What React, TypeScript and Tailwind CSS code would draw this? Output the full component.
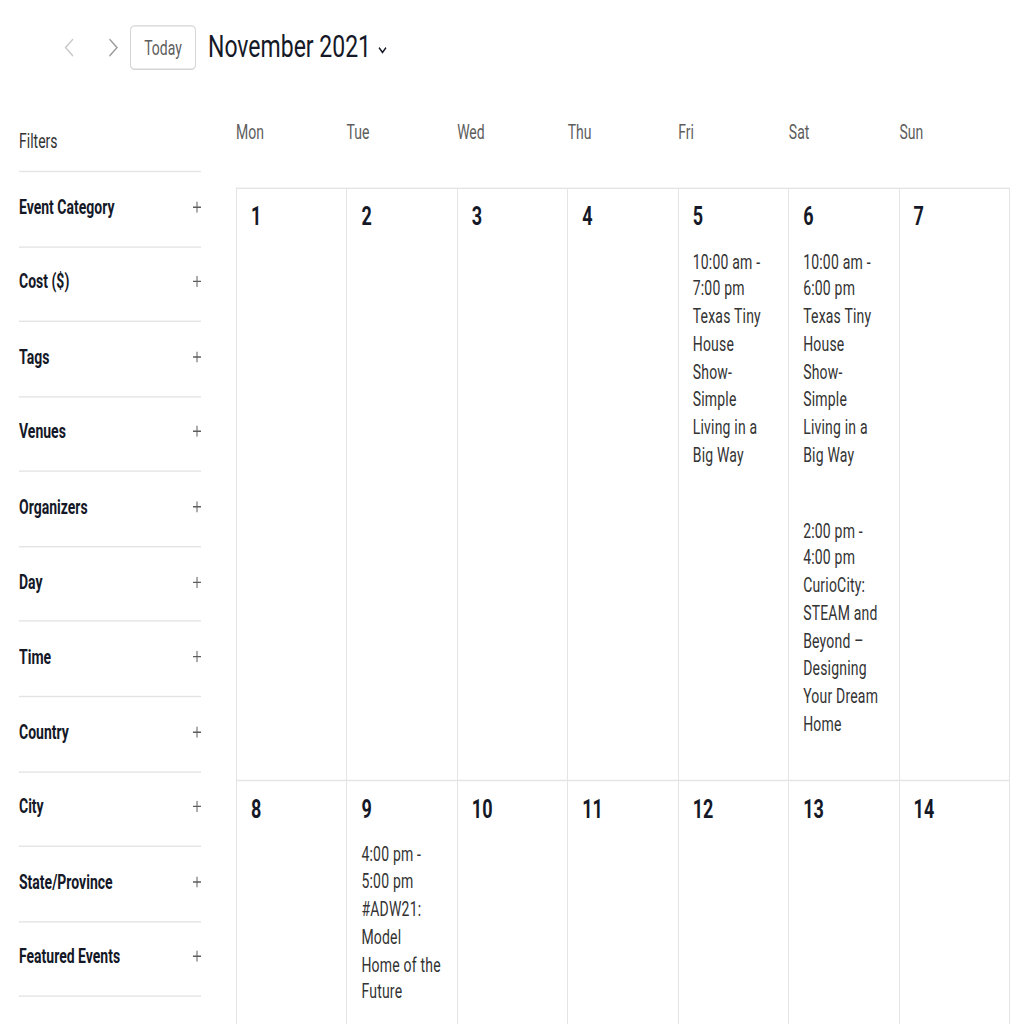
import React from "react";

type CalEvent = { time: string[]; title: string[] };
type Day = { n: number; events?: CalEvent[] };

const filters = [
  "Event Category",
  "Cost ($)",
  "Tags",
  "Venues",
  "Organizers",
  "Day",
  "Time",
  "Country",
  "City",
  "State/Province",
  "Featured Events",
];

const weekdays = ["Mon", "Tue", "Wed", "Thu", "Fri", "Sat", "Sun"];

const tinyHouse = ["Texas Tiny", "House", "Show-", "Simple", "Living in a", "Big Way"];

const weeks: Day[][] = [
  [
    { n: 1 },
    { n: 2 },
    { n: 3 },
    { n: 4 },
    { n: 5, events: [{ time: ["10:00 am -", "7:00 pm"], title: tinyHouse }] },
    {
      n: 6,
      events: [
        { time: ["10:00 am -", "6:00 pm"], title: tinyHouse },
        {
          time: ["2:00 pm -", "4:00 pm"],
          title: ["CurioCity:", "STEAM and", "Beyond \u2013", "Designing", "Your Dream", "Home"],
        },
      ],
    },
    { n: 7 },
  ],
  [
    { n: 8 },
    {
      n: 9,
      events: [
        { time: ["4:00 pm -", "5:00 pm"], title: ["#ADW21:", "Model", "Home of the", "Future"] },
      ],
    },
    { n: 10 },
    { n: 11 },
    { n: 12 },
    { n: 13 },
    { n: 14 },
  ],
];

function Plus() {
  return (
    <svg width="8" height="8" viewBox="0 0 8 8" fill="none" stroke="#5d5d5d" strokeWidth="1">
      <path d="M4 0v8M0 4h8" />
    </svg>
  );
}

function Chevron({ dir, color }: { dir: "left" | "right"; color: string }) {
  return (
    <svg width="10" height="14" viewBox="0 0 10 14" fill="none" stroke={color} strokeWidth="1.2">
      {dir === "left" ? <path d="M9 1 1.5 7 9 13" /> : <path d="M1.5 1 9 7l-7.5 6" />}
    </svg>
  );
}

function DayCell({ day, tall }: { day: Day; tall: boolean }) {
  return (
    <div
      className={`border-r border-b border-[#e4e4e4] px-[14px] pt-[8px] ${
        tall ? "h-[423px]" : "h-[300px]"
      }`}
    >
      <div className="text-[18px] leading-[24px] font-bold text-[#141827]">{day.n}</div>
      {day.events && (
        <div className="mt-[10.5px] flex flex-col gap-[34px]">
          {day.events.map((ev, i) => (
            <div key={i} className="text-[14px] leading-[19.75px] tracking-[0.2px] text-[#333]">
              {[...ev.time, ...ev.title].map((line, j) => (
                <div key={j} className="whitespace-nowrap">
                  {line}
                </div>
              ))}
            </div>
          ))}
        </div>
      )}
    </div>
  );
}

export default function App() {
  return (
    <div className="h-screen w-[1024px] overflow-hidden bg-white font-[Roboto,sans-serif]">
      {/* the whole calendar is drawn at a 1.4 vertical stretch */}
      <div className="w-[1024px] origin-top-left scale-y-[1.4]">
        <header className="flex h-[68px] items-center pl-[64px]">
          <div className="flex items-center gap-[34px]">
            <Chevron dir="left" color="#c9c9c9" />
            <Chevron dir="right" color="#9a9a9a" />
          </div>
          <button className="ml-[12px] flex h-[32px] w-[66px] items-center justify-center rounded-[4px] border border-[#d5d5d5] text-[14px] text-[#5d5d5d]">
            Today
          </button>
          <div className="ml-[12px] flex items-center gap-[7px] text-[23px] leading-[30px] text-[#141827]">
            <span>November 2021</span>
            <svg width="9" height="6" viewBox="0 0 9 6" fill="none" stroke="#141827" strokeWidth="1.3" className="mt-[4px]">
              <path d="M1 1l3.5 3.5L8 1" />
            </svg>
          </div>
        </header>

        <div className="flex pl-[19px]">
          <aside className="w-[182px] shrink-0">
            <div className="h-[55px] border-b border-[#e4e4e4] pt-[23px] text-[14px] leading-[20px] text-[#333]">
              Filters
            </div>
            {filters.map((f) => (
              <div
                key={f}
                className="flex h-[53.57px] items-center justify-between border-b border-[#e4e4e4] pb-[3px]"
              >
                <span className="text-[14px] leading-[20px] font-bold text-[#141827]">{f}</span>
                <Plus />
              </div>
            ))}
          </aside>

          <main className="ml-[35px] w-[774px]">
            <div className="grid h-[66px] grid-cols-7 pt-[16px] text-[14px] leading-[20px] text-[#5d5d5d]">
              {weekdays.map((d) => (
                <div key={d}>{d}</div>
              ))}
            </div>
            <div className="grid grid-cols-7 border-t border-l border-[#e4e4e4]">
              {weeks.map((week, wi) =>
                week.map((day) => <DayCell key={day.n} day={day} tall={wi === 0} />)
              )}
            </div>
          </main>
        </div>
      </div>
    </div>
  );
}
